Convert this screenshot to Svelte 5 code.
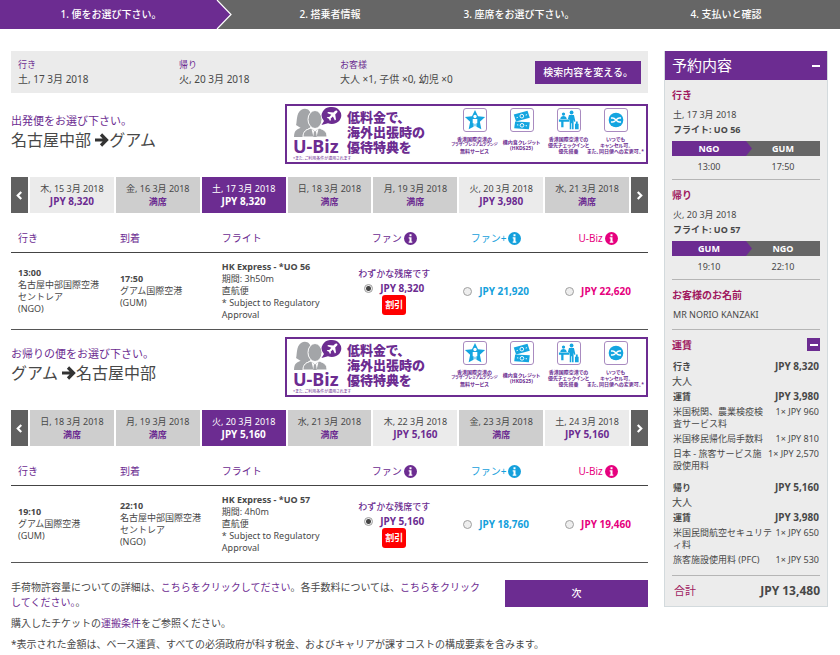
<script lang="ts">
  type Day = { date: string; price: string; soldOut?: boolean }
  type Stop = { time: string; airport: string[]; code: string }

  const steps = ['1. 便をお選び下さい。', '2. 搭乗者情報', '3. 座席をお選び下さい。', '4. 支払いと確認']

  const search = [
    { label: '行き', value: '土, 17 3月 2018' },
    { label: '帰り', value: '火, 20 3月 2018' },
    { label: 'お客様', value: '大人 ×1, 子供 ×0, 幼児 ×0' },
  ]

  function full(date: string): Day {
    return { date, price: '満席', soldOut: true }
  }

  const nagoya: string[] = ['名古屋中部国際空港', 'セントレア']
  const guam: string[] = ['グアム国際空港']

  const trips = [
    {
      id: 'out',
      label: '出発便をお選び下さい。',
      from: '名古屋中部',
      to: 'グアム',
      days: [
        { date: '木, 15 3月 2018', price: 'JPY 8,320' },
        full('金, 16 3月 2018'),
        { date: '土, 17 3月 2018', price: 'JPY 8,320' },
        full('日, 18 3月 2018'),
        full('月, 19 3月 2018'),
        { date: '火, 20 3月 2018', price: 'JPY 3,980' },
        full('水, 21 3月 2018'),
      ] as Day[],
      depart: { time: '13:00', airport: nagoya, code: 'NGO' } as Stop,
      arrive: { time: '17:50', airport: guam, code: 'GUM' } as Stop,
      flight: 'UO 56',
      duration: '3h50m',
      fares: ['JPY 8,320', 'JPY 21,920', 'JPY 22,620'],
    },
    {
      id: 'back',
      label: 'お帰りの便をお選び下さい。',
      from: 'グアム',
      to: '名古屋中部',
      days: [
        full('日, 18 3月 2018'),
        full('月, 19 3月 2018'),
        { date: '火, 20 3月 2018', price: 'JPY 5,160' },
        full('水, 21 3月 2018'),
        { date: '木, 22 3月 2018', price: 'JPY 5,160' },
        full('金, 23 3月 2018'),
        { date: '土, 24 3月 2018', price: 'JPY 5,160' },
      ] as Day[],
      depart: { time: '19:10', airport: guam, code: 'GUM' } as Stop,
      arrive: { time: '22:10', airport: nagoya, code: 'NGO' } as Stop,
      flight: 'UO 57',
      duration: '4h0m',
      fares: ['JPY 5,160', 'JPY 18,760', 'JPY 19,460'],
    },
  ]

  const fareTypes = [
    { name: 'ファン', cls: 'fun' },
    { name: 'ファン+', cls: 'plus' },
    { name: 'U-Biz', cls: 'ubiz' },
  ]

  const perks = [
    { icon: 'lounge', lines: ['香港国際空港の', 'プラザ・プレミアムラウンジ', '無料サービス'] },
    { icon: 'meal', lines: ['機内食クレジット', '(HKD$25)'] },
    { icon: 'checkin', lines: ['香港国際空港での', '優先チェックインと', '優先搭乗'] },
    { icon: 'change', lines: ['いつでも', 'キャンセル可。', 'また、同日便への変更可。*'] },
  ]

  const legs = [
    { title: '行き', date: '土, 17 3月 2018', flight: 'UO 56', from: 'NGO', to: 'GUM', dep: '13:00', arr: '17:50' },
    { title: '帰り', date: '火, 20 3月 2018', flight: 'UO 57', from: 'GUM', to: 'NGO', dep: '19:10', arr: '22:10' },
  ]

  const fareGroups = [
    {
      title: '行き',
      total: 'JPY 8,320',
      base: 'JPY 3,980',
      taxes: [
        { name: '米国税関、農業検疫検\n査サービス料', price: '1× JPY 960' },
        { name: '米国移民帰化局手数料', price: '1× JPY 810' },
        { name: '日本 - 旅客サービス施\n設使用料', price: '1× JPY 2,570' },
      ],
    },
    {
      title: '帰り',
      total: 'JPY 5,160',
      base: 'JPY 3,980',
      taxes: [
        { name: '米国民間航空セキュリテ\nィ料', price: '1× JPY 650' },
        { name: '旅客施設使用料 (PFC)', price: '1× JPY 530' },
      ],
    },
  ]

  let activeDay: Record<string, number> = $state({ out: 2, back: 2 })
  let chosen: Record<string, number> = $state({ out: 0, back: 0 })
  let summaryOpen = $state(true)
  let faresOpen = $state(true)
</script>

{#snippet perkIcon(name: string)}
  <svg viewBox="0 0 24 24" width="24" height="24" aria-hidden="true">
    {#if name === 'lounge'}
      <path d="M12 1l3.300 6.800 7.700.9-5.700 5.200L18.900 22 12 18.500 5.100 22l1.600-8.100L1 8.700l7.700-.9z" fill="#14a5e0" />
      <circle cx="12" cy="8.200" r="1.800" fill="#fff" />
      <path d="M9.500 10.800h5v4.700h-1V20h-1v-4h-1v4h-1v-4.500h-1z" fill="#fff" />
    {:else if name === 'meal'}
      <g fill="#14a5e0">
        <path d="M3 6l15-4 2.500 7.500-15 4z" />
        <path d="M4.500 13.500l16 1-1 7.500-16-1z" />
      </g>
      <g fill="none" stroke="#fff">
        <circle cx="11.800" cy="7.800" r="2" />
        <circle cx="12" cy="17.800" r="2" />
        <path d="M6 9.500l1.500-.4M16 6.600l1.500-.4M6.500 17.300l1.500.1M16 18.200l1.500.1" />
      </g>
    {:else if name === 'checkin'}
      <g fill="#14a5e0">
        <circle cx="6" cy="5.500" r="1.800" />
        <path d="M2.500 10.800c0-4.300 7-4.300 7 0zM1 11.500h11.500v2.500H1zM3.500 14H6v6H3.500z" />
        <circle cx="14.800" cy="3.800" r="2.100" />
        <path d="M12 6.500h5.400l1.600 7-1.400.5-.6-2.500V22h-1.700v-6.500h-.8V22h-1.700V12l-2-1z" />
        <path d="M18.500 16h4v6h-4zM19.500 13.500h2V16h-2z" />
      </g>
    {:else}
      <circle cx="12" cy="12" r="8" fill="#14a5e0" />
      <path d="M6.500 9.800h2c3 0 4 4.400 7 4.400h2M6.500 14.200h2c3 0 4-4.400 7-4.400h2" fill="none" stroke="#fff" stroke-width="1.500" />
    {/if}
  </svg>
{/snippet}

{#snippet banner()}
  <a class="banner" href="#ubiz">
    <span class="brand">
      <svg viewBox="0 0 50 31" width="50" height="31" aria-hidden="true">
        <g fill="#a3a5a8">
          <path d="M8 3c5-3 10 0 10 6l1 9c-1 2-3 3-4 4l-4 1-8-5C4 16 3 6 8 3z" />
          <path d="M1 30c0-7 3-8 9-10l5 4-2 6z" />
          <ellipse cx="22" cy="12.500" rx="7" ry="9" stroke="#fff" />
          <path d="M10 30c0-6 3-7 8-9l4 3 4-3c5 2 8 3 8 9z" stroke="#fff" />
        </g>
        <path d="M18.500 22l3.500 3 3.500-3-2 8h-3z" fill="#fff" />
        <path d="M21 24.500h2l.8 5.500h-3.600z" fill="#a3a5a8" />
        <path d="M39 0a9.500 8.500 0 1 1-4 16.300L28.500 18l2.500-4A9.500 8.500 0 0 1 39 0z" fill="#6c2c91" />
        <path d="M44 3.800c1 .8.300 1.700-.4 2.300l-1.400 1.300.8 5.100-1.100 1-2-4-2.200 1.900.2 1.700-.9.800-1.100-2.100-2.200-1 .9-.9 1.700.1 2-2.200-4.100-1.800 1-1.100 5.200.7 1.300-1.400c.7-.6 1.600-1.100 2.300-.4z" fill="#fff" />
      </svg>
      <b>U-Biz</b>
      <small>*また、ご利用条件が適用されます</small>
    </span>
    <strong>低料金で、<br />海外出張時の<br />優待特典を</strong>
    <span class="perks">
      {#each perks as perk}
        <span class="perk">
          <span class="perk-icon">{@render perkIcon(perk.icon)}</span>
          <span class="perk-text {perk.icon}">
            {#each perk.lines as line}<span>{line}</span>{/each}
          </span>
        </span>
      {/each}
    </span>
  </a>
{/snippet}

{#snippet chevron(d: string)}
  <svg viewBox="0 0 8 10" width="7" height="9" aria-hidden="true">
    <path {d} fill="none" stroke="#fff" stroke-width="2.500" />
  </svg>
{/snippet}

{#snippet stop(s: Stop)}
  <b>{s.time}</b>
  {#each s.airport as part}<br />{part}{/each}
  <br />({s.code})
{/snippet}

<nav>
  <ol class="steps">
    {#each steps as step, i}
      <li class:current={i === 0}>
        <span>{step}</span>
        {#if i === 0}
          <svg class="tip" viewBox="0 0 16 29" preserveAspectRatio="none" aria-hidden="true">
            <path d="M0 0h1l14 14.500L1 29H0z" fill="#6c2c91" />
            <path d="M1 0l14 14.500L1 29" fill="none" stroke="#fff" stroke-width="1.200" />
          </svg>
        {/if}
      </li>
    {/each}
  </ol>
</nav>

<div class="page">
  <main>
    <section class="search">
      {#each search as item}
        <div class="search-item">
          <span>{item.label}</span>
          <p>{item.value}</p>
        </div>
      {/each}
      <button class="primary">検索内容を変える。</button>
    </section>

    {#each trips as trip}
      <section class="trip">
        <div class="intro">
          <header>
            <p>{trip.label}</p>
            <h2>
              {trip.from}
              <svg viewBox="0 0 14 14" width="14" height="14" aria-label="→">
                <path d="M0 7h11M6 1.500L11.500 7 6 12.500" fill="none" stroke="#333" stroke-width="3.200" />
              </svg>{trip.to}
            </h2>
          </header>
          {@render banner()}
        </div>

        <div class="days">
          <button class="move" aria-label="前へ">{@render chevron('M6 1L2 5l4 4')}</button>
          {#each trip.days as day, i}
            <button
              class="day"
              class:sold-out={day.soldOut}
              class:active={activeDay[trip.id] === i}
              onclick={() => (activeDay[trip.id] = i)}
            >
              {day.date}<b>{day.price}</b>
            </button>
          {/each}
          <button class="move" aria-label="次へ">{@render chevron('M2 1l4 4-4 4')}</button>
        </div>

        <table>
          <thead>
            <tr>
              <th>行き</th>
              <th>到着</th>
              <th class="flight">フライト</th>
              {#each fareTypes as fare}
                <th class="fare {fare.cls}">
                  <span class="fare-name">
                    {fare.name}
                    <button class="info" aria-label="{fare.name}の詳細">
                      <svg viewBox="0 0 13 13" width="13" height="13" aria-hidden="true">
                        <circle cx="6.500" cy="6.500" r="6.500" fill="currentColor" />
                        <path d="M5.500 2.200h2v2h-2zM4.700 5.200h2.800v4.300h.8v1.200H4.700V9.500h.8V6.400h-.8z" fill="#fff" />
                      </svg>
                    </button>
                  </span>
                </th>
              {/each}
            </tr>
          </thead>
          <tbody>
            <tr>
              <td>{@render stop(trip.depart)}</td>
              <td>{@render stop(trip.arrive)}</td>
              <td>
                <b>HK Express - *{trip.flight}</b><br />
                期間: {trip.duration}<br />
                直航便<br />
                * Subject to Regulatory Approval
              </td>
              {#each trip.fares as price, i}
                <td class="fare {fareTypes[i].cls}">
                  {#if i === 0}<span class="few">わずかな残席です</span>{/if}
                  <label>
                    <input type="radio" name={trip.id} value={i} bind:group={chosen[trip.id]} />
                    <b>{price}</b>
                  </label>
                  {#if i === 0}<span class="deal">割引</span>{/if}
                </td>
              {/each}
            </tr>
          </tbody>
        </table>
      </section>
    {/each}

    <section class="notes">
      <div class="notes-top">
        <p>
          手荷物許容量についての詳細は、<a href="#baggage">こちらをクリックしてださい</a>。各手数料については、<a href="#fees">こちらをクリックしてください。</a>。
        </p>
        <button class="primary next">次</button>
      </div>
      <p>購入したチケットの<a href="#conditions">運搬条件</a>をご参照ください。</p>
      <p>*表示された金額は、ベース運賃、すべての必須政府が科す税金、およびキャリアが課すコストの構成要素を含みます。</p>
    </section>
  </main>

  <aside>
    <header class="side-head">
      <h2>予約内容</h2>
      <button class="toggle" aria-label="予約内容を閉じる" onclick={() => (summaryOpen = !summaryOpen)}><i></i></button>
    </header>

    {#if summaryOpen}
      <div class="side-body">
        {#each legs as leg}
          <section class="leg">
            <h3>{leg.title}</h3>
            <p>{leg.date}</p>
            <p><b>フライト: {leg.flight}</b></p>
            <div class="route">
              <b class="origin">{leg.from}</b>
              <b>{leg.to}</b>
            </div>
            <div class="times">
              <span>{leg.dep}</span>
              <span>{leg.arr}</span>
            </div>
          </section>
        {/each}

        <section class="guest">
          <h3>お客様のお名前</h3>
          <p>MR NORIO KANZAKI</p>
        </section>

        <section>
          <div class="fares-head">
            <h3>運賃</h3>
            <button class="toggle" aria-label="運賃を閉じる" onclick={() => (faresOpen = !faresOpen)}><i></i></button>
          </div>
          {#if faresOpen}
            {#each fareGroups as group}
              <div class="group">
                <div class="row strong"><span>{group.title}</span><span>{group.total}</span></div>
                <p class="who">大人</p>
                <div class="row strong"><span>運賃</span><span>{group.base}</span></div>
                {#each group.taxes as tax}
                  <div class="row tax"><span>{tax.name}</span><span>{tax.price}</span></div>
                {/each}
              </div>
            {/each}
          {/if}
          <div class="total"><span>合計</span><b>JPY 13,480</b></div>
        </section>
      </div>
    {/if}
  </aside>
</div>

<style>
  :global(body) {
    background: #fff;
    color: #484848;
    font-family: "Noto Sans", "Noto Sans CJK JP", sans-serif;
    font-size: 9px;
    line-height: 12px;
  }

  h2, h3, p, ol { margin: 0; padding: 0; }
  button {
    border: 0;
    padding: 0;
    font-family: inherit;
    color: #fff;
    cursor: pointer;
  }
  svg { display: block; }
  a { color: #6c2c91; text-decoration: none; }

  .steps {
    display: grid;
    grid-template-columns: 216fr 216fr 174fr 234fr;
    list-style: none;
    background: #666;
    color: #fff;
    font-size: 10px;
    font-weight: 500;
    line-height: 29px;
    text-align: center;
  }
  .steps li { position: relative; }
  .steps .current { background: #6c2c91; padding-left: 6px; }
  .steps .current + li { padding-left: 12px; }
  .steps li:last-child { padding-left: 6px; }
  .tip {
    position: absolute;
    top: 0;
    left: 100%;
    width: 16px;
    height: 100%;
  }

  .page {
    display: flex;
    align-items: flex-start;
    gap: 16px;
    padding: 22px 12px 4px 11px;
  }
  main { flex: 1; min-width: 0; }

  .primary {
    background: #6c2c91;
    font-size: 10px;
    font-weight: 500;
  }

  .search {
    display: flex;
    align-items: center;
    background: #ebebeb;
    padding: 7px;
  }
  .search-item { width: 161px; line-height: 14px; }
  .search-item span { color: #6c2c91; }
  .search-item p { font-size: 10px; white-space: nowrap; }
  .search .primary {
    margin-left: auto;
    padding: 0 8px;
    line-height: 23px;
  }

  .trip { margin-top: 11px; }
  .trip + .trip { margin-top: 7px; }
  .intro { display: flex; justify-content: space-between; }
  .intro header { padding-top: 9px; }
  .intro header p {
    color: #6c2c91;
    font-size: 11px;
    line-height: 16px;
  }
  .intro h2 {
    font-size: 16px;
    font-weight: 400;
    line-height: 22px;
  }
  .intro h2 svg { display: inline-block; vertical-align: -1px; }

  .banner {
    display: flex;
    box-sizing: border-box;
    width: 363px;
    height: 60px;
    border: 2px solid #6c2c91;
    font-feature-settings: "palt";
  }
  .brand {
    width: 54px;
    padding: 1px 0 0 6px;
  }
  .brand b {
    display: block;
    font-size: 18px;
    line-height: 17px;
    white-space: nowrap;
  }
  .brand small {
    display: block;
    font-size: 4px;
    line-height: 7px;
    white-space: nowrap;
  }
  .banner strong {
    width: 104px;
    padding-top: 4px;
    font-size: 13px;
    font-weight: 900;
    line-height: 15px;
    white-space: nowrap;
  }
  .perks {
    flex: 1;
    display: grid;
    grid-template-columns: repeat(4, 47px);
    padding-top: 2px;
  }
  .perk {
    display: flex;
    flex-direction: column;
    align-items: center;
  }
  .perk-icon {
    border: 1px solid #a98bc0;
    border-radius: 3px;
  }
  .perk-icon svg { width: 22px; height: 22px; }
  .perk-text {
    display: flex;
    flex-direction: column;
    align-items: center;
    justify-content: center;
    min-height: 18px;
    margin-top: 4px;
    font-size: 5px;
    font-weight: 700;
    line-height: 6px;
    white-space: nowrap;
  }
  .perk-text.lounge span:nth-child(2) { font-size: 4px; }

  .days {
    display: flex;
    gap: 2px;
    margin-top: 13px;
  }
  .days button { height: 36px; }
  .move {
    display: flex;
    align-items: center;
    justify-content: center;
    width: 17px;
    background: #606060;
  }
  .day {
    flex: 1;
    background: #ebebeb;
    color: #484848;
    font-size: 9px;
    line-height: 13px;
    white-space: nowrap;
  }
  .day b { display: block; color: #6c2c91; }
  .day:not(.sold-out) b { font-size: 10px; }
  .day.sold-out { background: #cecece; }
  .day.active, .day.active b { background: #6c2c91; color: #fff; }

  table {
    width: 100%;
    table-layout: fixed;
    border-collapse: collapse;
  }
  th {
    box-sizing: border-box;
    padding: 18px 0 7px 7px;
    border-bottom: 1px solid #444;
    color: #6c2c91;
    font-size: 10px;
    font-weight: 400;
    line-height: 14px;
    text-align: left;
  }
  th.flight { width: 20%; }
  td {
    height: 60px;
    padding: 8px 0 8px 7px;
    border-bottom: 1px solid #555;
    vertical-align: middle;
  }
  th.fare, td.fare { padding-left: 2px; text-align: center; }
  .fun { color: #6c2c91; }
  th.plus, .plus { color: #14a0dc; }
  th.ubiz, .ubiz { color: #e6007e; }
  .fare-name {
    display: inline-flex;
    align-items: center;
    gap: 2px;
    height: 14px;
  }
  .info { background: none; color: inherit; }
  .few { display: block; font-weight: 500; line-height: 14px; }
  label {
    display: flex;
    align-items: center;
    justify-content: center;
    gap: 7px;
    font-size: 10px;
    line-height: 14px;
  }
  input {
    appearance: none;
    box-sizing: border-box;
    width: 9px;
    height: 9px;
    margin: 0;
    border: 1px solid #a0a0a0;
    border-radius: 50%;
    background: #eee;
  }
  input:checked {
    background: radial-gradient(circle, #444 0 2px, #eee 3px);
  }
  .deal {
    display: inline-block;
    padding: 0 3px;
    border-radius: 3px;
    background: #f00;
    color: #fff;
    font-weight: 700;
    line-height: 20px;
  }

  .notes {
    margin-top: 17px;
    font-size: 10px;
    line-height: 15px;
  }
  .notes p + p, .notes-top + p { margin-top: 6px; }
  .notes-top {
    display: flex;
    justify-content: space-between;
    align-items: flex-start;
    gap: 18px;
  }
  .next {
    flex: none;
    width: 143px;
    line-height: 27px;
  }

  aside {
    width: 164px;
    box-sizing: border-box;
    background: #ececec;
    border: 1px solid #d3dadd;
    border-top: 0;
  }
  .side-head {
    display: flex;
    align-items: center;
    justify-content: space-between;
    height: 29px;
    padding: 0 7px;
    background: #6c2c91;
    color: #fff;
  }
  .side-head h2 { font-size: 15px; font-weight: 400; line-height: 29px; }
  .toggle {
    display: flex;
    align-items: center;
    justify-content: center;
    width: 13px;
    height: 13px;
    background: #6c2c91;
  }
  .toggle i { width: 8px; height: 2px; background: #fff; }
  .side-head .toggle { width: 8px; }

  .side-body { padding: 0 7px; }
  h3 {
    color: #a0195f;
    font-size: 10px;
    font-weight: 700;
    line-height: 14px;
  }
  .leg, .guest {
    padding: 8px 0 5px;
    border-bottom: 1px solid #b5b5b5;
  }
  .guest { padding-bottom: 7px; }
  .leg p, .guest p { padding-left: 1px; line-height: 15px; }
  .leg h3, .guest h3 { margin-bottom: 5px; }
  .route, .times {
    display: grid;
    grid-template-columns: 1fr 1fr;
    margin-top: 4px;
    line-height: 14px;
    text-align: center;
  }
  .route {
    background: #666;
    color: #fff;
    line-height: 15px;
  }
  .origin {
    margin-right: -6px;
    padding-right: 6px;
    background: #6c2c91;
    clip-path: polygon(0 0, calc(100% - 6px) 0, 100% 50%, calc(100% - 6px) 100%, 0 100%);
  }

  .fares-head {
    display: flex;
    justify-content: space-between;
    padding-top: 8px;
  }
  .group { margin-top: 7px; }
  .row {
    display: flex;
    justify-content: space-between;
    padding: 0 1px;
    white-space: pre;
  }
  .strong { font-weight: 700; line-height: 15px; }
  .strong span:last-child { font-size: 10px; }
  .who { font-size: 10px; line-height: 15px; }
  .tax { padding: 2px 1px 1px; }
  .total {
    display: flex;
    justify-content: space-between;
    margin-top: 8px;
    padding-left: 2px;
    border-top: 1px solid #b5b5b5;
    font-size: 12px;
    line-height: 30px;
  }
  .total span { color: #a0195f; font-size: 11px; }
</style>
